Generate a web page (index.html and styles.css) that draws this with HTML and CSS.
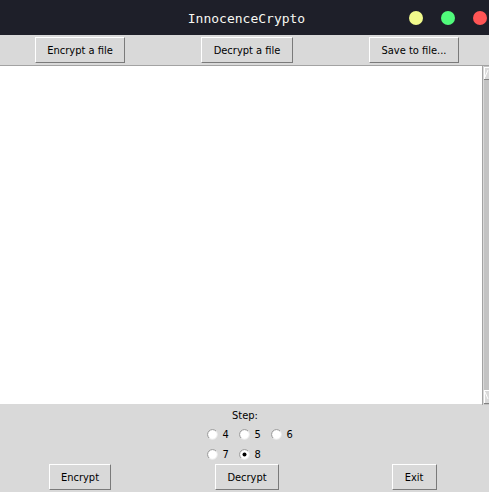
FILE: index.html
```html
<!DOCTYPE html>
<html>
<head>
<meta charset="utf-8">
<title>InnocenceCrypto</title>
<link rel="stylesheet" href="styles.css">
</head>
<body>
<div class="window">
  <div class="titlebar">
    <span class="title">InnocenceCrypto</span>
    <div class="lights">
      <span class="dot yellow"></span>
      <span class="dot green"></span>
      <span class="dot red"></span>
    </div>
  </div>
  <div class="toolbar row3">
    <button class="btn w90">Encrypt a file</button>
    <button class="btn w92">Decrypt a file</button>
    <button class="btn w90">Save to file...</button>
  </div>
  <div class="editor">
    <div class="textarea"></div>
    <div class="scrollbar">
      <svg width="7" height="339" viewBox="0 0 7 339">
        <rect x="0" y="0" width="1" height="339" fill="#a3a3a3"/>
        <rect x="2" y="0" width="5" height="339" fill="#c3c3c3"/>
        <rect x="2" y="1" width="5" height="12" fill="#d9d9d9"/>
        <rect x="2" y="1" width="1" height="12" fill="#ffffff"/>
        <rect x="2" y="1" width="5" height="1" fill="#ffffff"/>
        <path d="M3 11 L6 4 L7 4 L7 11 Z" fill="#d9d9d9"/>
        <path d="M3 11 L6 4" stroke="#ffffff" stroke-width="1"/>
        <rect x="2" y="13" width="5" height="1" fill="#828282"/>
        <rect x="2" y="324" width="5" height="13" fill="#d9d9d9"/>
        <rect x="2" y="324" width="1" height="13" fill="#ffffff"/>
        <rect x="2" y="324" width="5" height="1" fill="#ffffff"/>
        <path d="M3 326 L6 333 L7 333 L7 326 Z" fill="#d9d9d9"/>
        <path d="M3 326 L6 333" stroke="#ffffff" stroke-width="1"/>
        <rect x="2" y="337" width="5" height="1" fill="#828282"/>
      </svg>
    </div>
  </div>
  <div class="controls">
    <div class="step-label">Step:</div>
    <div class="radios">
      <label class="radio"><svg class="ind" width="11" height="11" viewBox="0 0 11 11"><circle cx="5.5" cy="5.5" r="4.8" fill="#ffffff" stroke="#ececec" stroke-width="1"/><path d="M2 9 A4.8 4.8 0 0 1 9 2" fill="none" stroke="#9a9a9a" stroke-width="1"/></svg><span>4</span></label>
      <label class="radio"><svg class="ind" width="11" height="11" viewBox="0 0 11 11"><circle cx="5.5" cy="5.5" r="4.8" fill="#ffffff" stroke="#ececec" stroke-width="1"/><path d="M2 9 A4.8 4.8 0 0 1 9 2" fill="none" stroke="#9a9a9a" stroke-width="1"/></svg><span>5</span></label>
      <label class="radio"><svg class="ind" width="11" height="11" viewBox="0 0 11 11"><circle cx="5.5" cy="5.5" r="4.8" fill="#ffffff" stroke="#ececec" stroke-width="1"/><path d="M2 9 A4.8 4.8 0 0 1 9 2" fill="none" stroke="#9a9a9a" stroke-width="1"/></svg><span>6</span></label>
      <label class="radio"><svg class="ind" width="11" height="11" viewBox="0 0 11 11"><circle cx="5.5" cy="5.5" r="4.8" fill="#ffffff" stroke="#ececec" stroke-width="1"/><path d="M2 9 A4.8 4.8 0 0 1 9 2" fill="none" stroke="#9a9a9a" stroke-width="1"/></svg><span>7</span></label>
      <label class="radio"><svg class="ind" width="11" height="11" viewBox="0 0 11 11"><circle cx="5.5" cy="5.5" r="4.8" fill="#ffffff" stroke="#ececec" stroke-width="1"/><path d="M2 9 A4.8 4.8 0 0 1 9 2" fill="none" stroke="#9a9a9a" stroke-width="1"/><circle cx="5.5" cy="5.5" r="2" fill="#000000"/></svg><span>8</span></label>
    </div>
    <div class="actions row3">
      <button class="btn w62">Encrypt</button>
      <button class="btn w64">Decrypt</button>
      <button class="btn w45">Exit</button>
    </div>
  </div>
</div>
</body>
</html>
```

FILE: styles.css
```css
html, body {
  margin: 0;
  padding: 0;
  background: #d9d9d9;
  overflow: hidden;
}

.window {
  width: 489px;
  height: 492px;
  overflow: hidden;
  display: flex;
  flex-direction: column;
  background: #d9d9d9;
  font-family: "DejaVu Sans", "Noto Sans", sans-serif;
  font-stretch: condensed;
  font-size: 11px;
  color: #000000;
}

.titlebar {
  height: 35px;
  flex: none;
  background: #1e1f29;
  display: flex;
  align-items: center;
  justify-content: center;
  position: relative;
}

.title {
  font-family: "DejaVu Sans Mono", "Liberation Mono", monospace;
  font-stretch: normal;
  font-size: 13px;
  color: #f8f8f2;
  padding-left: 4px;
  padding-top: 1px;
}

.lights {
  position: absolute;
  right: 2px;
  top: 11px;
  display: flex;
  gap: 18px;
}

.dot {
  width: 14px;
  height: 14px;
  border-radius: 50%;
  display: block;
}
.yellow { background: #f1fa8c; }
.green { background: #50fa7b; }
.red { background: #ff5555; }

.row3 {
  display: grid;
  grid-template-columns: 160px 174px 160px;
  justify-items: center;
  width: 494px;
}

.toolbar {
  height: 30px;
  flex: none;
  padding-top: 2px;
  box-sizing: border-box;
  align-items: start;
}

.btn {
  height: 26px;
  box-sizing: border-box;
  background: #d9d9d9;
  border: 1px solid;
  border-color: #ffffff #7a7a7a #7a7a7a #ffffff;
  font-family: inherit;
  font-stretch: condensed;
  font-size: 11px;
  color: #000000;
  padding: 0;
  margin: 0;
  display: flex;
  align-items: center;
  justify-content: center;
}
.w90 { width: 90px; }
.w92 { width: 92px; }
.w62 { width: 62px; }
.w64 { width: 64px; }
.w45 { width: 45px; }

.editor {
  height: 339px;
  flex: none;
  display: flex;
  border-top: 1px solid #a3a3a3;
  box-sizing: border-box;
}

.textarea {
  flex: 1;
  background: #ffffff;
}

.scrollbar {
  width: 7px;
  flex: none;
  display: flex;
}

.controls {
  flex: 1;
  display: flex;
  flex-direction: column;
  align-items: stretch;
  padding-top: 4px;
}

.step-label {
  height: 16px;
  line-height: 16px;
  text-align: center;
  padding-left: 1px;
}

.radios {
  display: grid;
  grid-template-columns: repeat(3, 32px);
  grid-auto-rows: 20px;
  justify-content: center;
  padding-left: 2px;
}

.radio {
  display: flex;
  align-items: center;
  gap: 5px;
  padding-left: 9px;
}

.ind { display: block; flex: none; }

.actions {
  margin-top: 0;
}
```
